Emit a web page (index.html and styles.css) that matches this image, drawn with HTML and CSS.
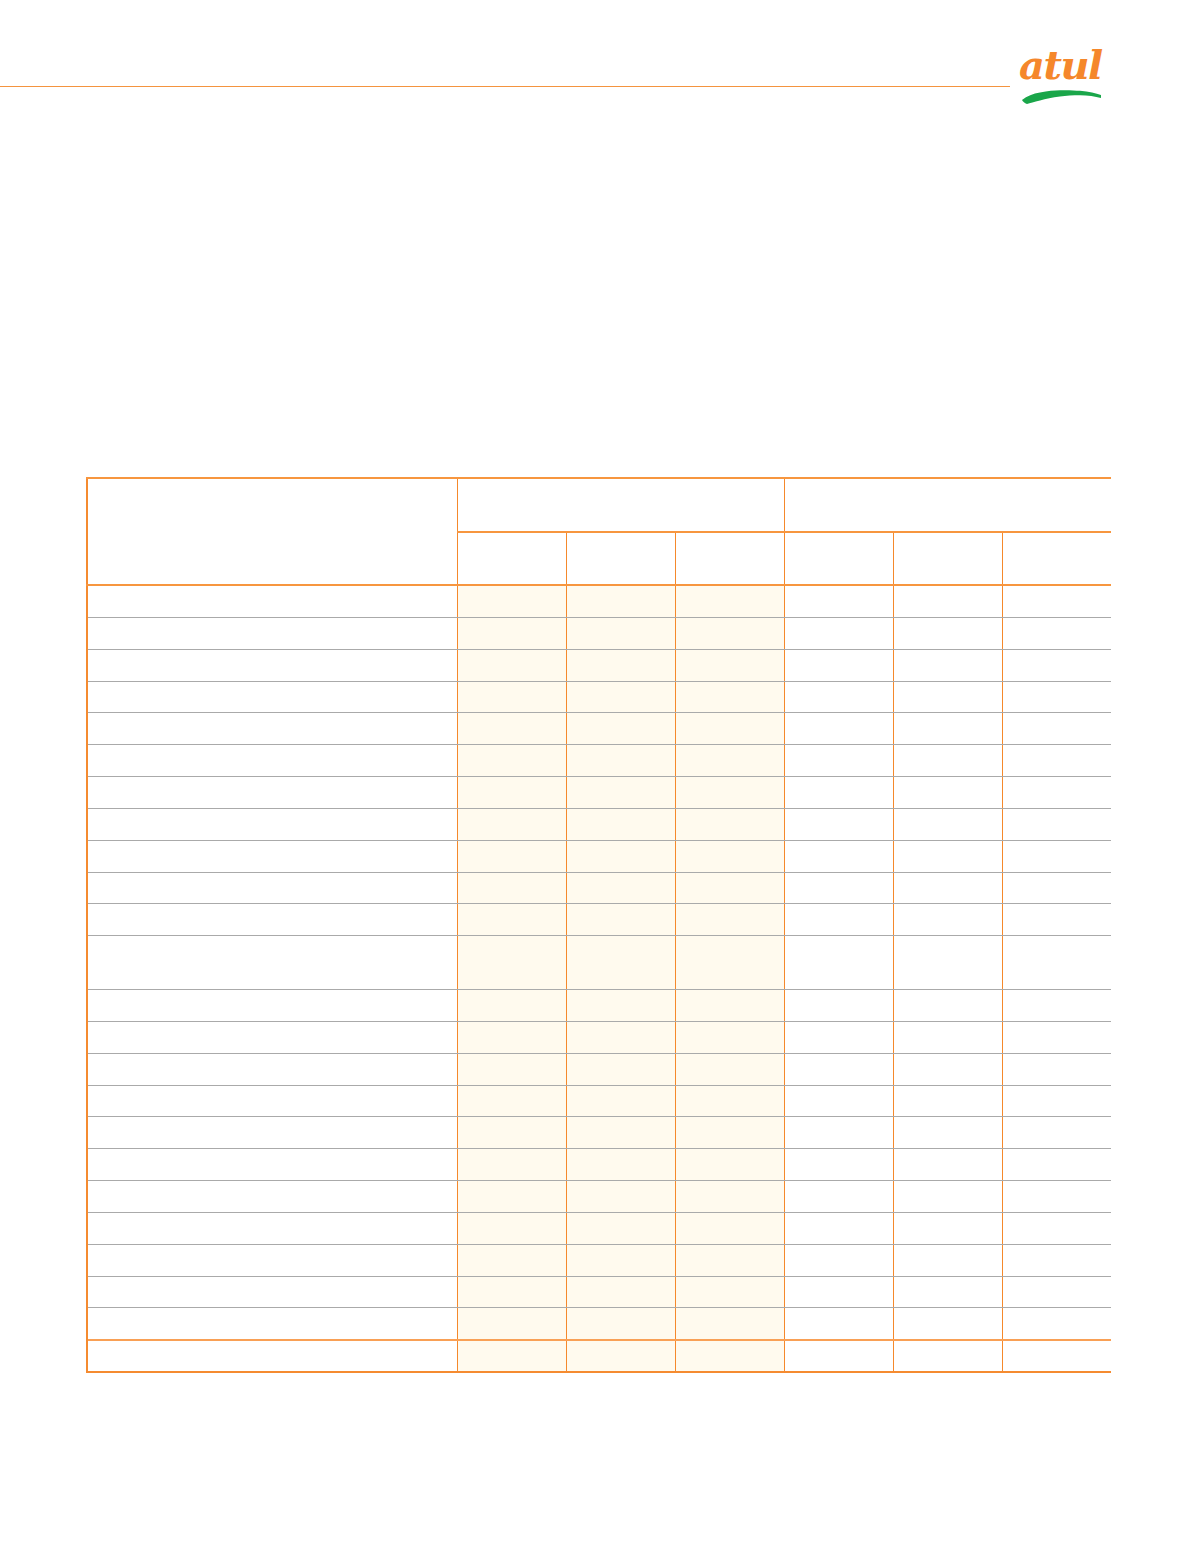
FILE: index.html
```html
<!DOCTYPE html>
<html lang="en">
<head>
<meta charset="utf-8">
<title>Atul</title>
<link rel="stylesheet" href="styles.css">
</head>
<body>
<header class="topbar">
  <div class="rule"></div>
  <div class="logo">
    <span class="logo-text">atul</span>
    <svg class="swoosh" width="86" height="17" viewBox="0 0 86 17" aria-hidden="true">
      <path d="M4 12 C9 8 15 5.5 22 4.5 C30 3 36 2.3 42 2.2 C50 2 57 2.3 62 2.8 C71 3.8 78 5.3 83 7 L83 10 C77 8.5 70 7.5 62 7.3 C55 7.3 48 7.8 42 8.6 C34 9.6 28 11 22 12.5 C16 14 12 15 9 16 C6.5 15.2 5 13.8 4 12 Z" fill="#1aa64a"/>
    </svg>
  </div>
</header>

<main class="content">
  <table class="grid">
    <colgroup>
      <col class="c-label">
      <col class="c-num"><col class="c-num"><col class="c-num">
      <col class="c-num"><col class="c-num"><col class="c-num">
    </colgroup>
    <thead>
      <tr class="h1">
        <th class="label" rowspan="2"></th>
        <th colspan="3"></th>
        <th colspan="3"></th>
      </tr>
      <tr class="h2">
        <th></th><th></th><th></th><th></th><th></th><th></th>
      </tr>
    </thead>
    <tbody>
      <tr><td class="label"></td><td class="hl"></td><td class="hl"></td><td class="hl"></td><td></td><td></td><td></td></tr>
      <tr><td class="label"></td><td class="hl"></td><td class="hl"></td><td class="hl"></td><td></td><td></td><td></td></tr>
      <tr><td class="label"></td><td class="hl"></td><td class="hl"></td><td class="hl"></td><td></td><td></td><td></td></tr>
      <tr><td class="label"></td><td class="hl"></td><td class="hl"></td><td class="hl"></td><td></td><td></td><td></td></tr>
      <tr><td class="label"></td><td class="hl"></td><td class="hl"></td><td class="hl"></td><td></td><td></td><td></td></tr>
      <tr><td class="label"></td><td class="hl"></td><td class="hl"></td><td class="hl"></td><td></td><td></td><td></td></tr>
      <tr><td class="label"></td><td class="hl"></td><td class="hl"></td><td class="hl"></td><td></td><td></td><td></td></tr>
      <tr><td class="label"></td><td class="hl"></td><td class="hl"></td><td class="hl"></td><td></td><td></td><td></td></tr>
      <tr><td class="label"></td><td class="hl"></td><td class="hl"></td><td class="hl"></td><td></td><td></td><td></td></tr>
      <tr><td class="label"></td><td class="hl"></td><td class="hl"></td><td class="hl"></td><td></td><td></td><td></td></tr>
      <tr><td class="label"></td><td class="hl"></td><td class="hl"></td><td class="hl"></td><td></td><td></td><td></td></tr>
      <tr class="tall"><td class="label"></td><td class="hl"></td><td class="hl"></td><td class="hl"></td><td></td><td></td><td></td></tr>
      <tr><td class="label"></td><td class="hl"></td><td class="hl"></td><td class="hl"></td><td></td><td></td><td></td></tr>
      <tr><td class="label"></td><td class="hl"></td><td class="hl"></td><td class="hl"></td><td></td><td></td><td></td></tr>
      <tr><td class="label"></td><td class="hl"></td><td class="hl"></td><td class="hl"></td><td></td><td></td><td></td></tr>
      <tr><td class="label"></td><td class="hl"></td><td class="hl"></td><td class="hl"></td><td></td><td></td><td></td></tr>
      <tr><td class="label"></td><td class="hl"></td><td class="hl"></td><td class="hl"></td><td></td><td></td><td></td></tr>
      <tr><td class="label"></td><td class="hl"></td><td class="hl"></td><td class="hl"></td><td></td><td></td><td></td></tr>
      <tr><td class="label"></td><td class="hl"></td><td class="hl"></td><td class="hl"></td><td></td><td></td><td></td></tr>
      <tr><td class="label"></td><td class="hl"></td><td class="hl"></td><td class="hl"></td><td></td><td></td><td></td></tr>
      <tr><td class="label"></td><td class="hl"></td><td class="hl"></td><td class="hl"></td><td></td><td></td><td></td></tr>
      <tr><td class="label"></td><td class="hl"></td><td class="hl"></td><td class="hl"></td><td></td><td></td><td></td></tr>
      <tr><td class="label"></td><td class="hl"></td><td class="hl"></td><td class="hl"></td><td></td><td></td><td></td></tr>
      <tr class="total"><td class="label"></td><td class="hl"></td><td class="hl"></td><td class="hl"></td><td></td><td></td><td></td></tr>
    </tbody>
  </table>
</main>
</body>
</html>
```

FILE: styles.css
```css
html, body {
  margin: 0;
  padding: 0;
  background: #ffffff;
  font-family: "Liberation Sans", Arial, sans-serif;
}

.topbar {
  display: flex;
  align-items: flex-start;
  height: 120px;
}

.rule {
  width: 1010px;
  height: 1.5px;
  margin-top: 85.5px;
  background: #f4943f;
}

.logo {
  position: relative;
  width: 90px;
  height: 60px;
  margin-left: 8px;
  margin-top: 44px;
}

.logo-text {
  display: block;
  font-family: "DejaVu Serif", "Liberation Serif", serif;
  font-style: italic;
  font-weight: bold;
  font-size: 40px;
  line-height: 42px;
  letter-spacing: -1.5px;
  color: #f5872b;
  padding-left: 1px;
}

.swoosh {
  position: absolute;
  left: 0;
  top: 44px;
}

.content {
  padding: 357px 0 0 86px;
}

.grid {
  border-collapse: collapse;
  table-layout: fixed;
  width: 1025px;
}

.grid .c-label {
  width: 370px;
}

.grid .c-num {
  width: 109px;
}

.grid th,
.grid td {
  padding: 0;
  border-left: 1px solid #f5892c;
  border-top: 1px solid #aaaaaa;
  border-bottom: 1px solid #aaaaaa;
  border-right: none;
}

.grid .label {
  border-left: 2px solid #f58b30;
}

.grid thead th {
  border-top: 2px solid #f7963f;
  border-bottom: 2px solid #f7963f;
  background: #ffffff;
}

.grid .h1 th {
  height: 52px;
}

.grid .h2 th {
  height: 51px;
  border-top: 1px solid #f9a055;
}

.grid tbody td {
  height: 30.85px;
}

.grid tbody tr:first-child td {
  border-top: 2px solid #f7963f;
}

.grid tbody td.hl {
  background: #fffaee;
}

.grid tbody tr.tall td {
  height: 52.7px;
}

.grid tbody tr.total td {
  height: 29.6px;
  border-top: 2px solid #f9a055;
  border-bottom: 2px solid #f58b30;
}
```
